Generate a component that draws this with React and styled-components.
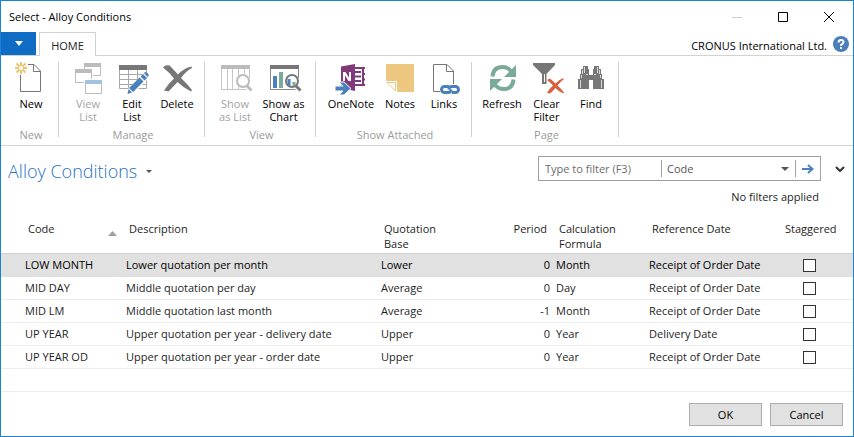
import React, { useState } from "react";
import styled, { createGlobalStyle } from "styled-components";

const GlobalStyle = createGlobalStyle`
  *, *::before, *::after { box-sizing: border-box; }
  body { margin: 0; background: #fff; }
  body, button, input, select {
    font-family: "Open Sans", "Noto Sans", sans-serif;
    font-size: 11px;
    color: #1e1e1e;
  }
  button { cursor: pointer; }
`;

const Window = styled.div`
  display: flex;
  flex-direction: column;
  min-height: 100vh;
  border: 1px solid #1883d7;
  background: #fff;
`;

const TitleBar = styled.header`
  display: flex;
  align-items: center;
  height: 31px;
  padding-left: 8px;
`;

const WindowTitle = styled.span`
  flex: 1;
  color: #000;
`;

const CaptionButton = styled.button`
  display: flex;
  align-items: center;
  justify-content: center;
  width: 46px;
  height: 28px;
  padding: 0;
  border: 0;
  background: none;

  &:last-child { margin-right: 1px; }
`;

const TabStrip = styled.nav`
  display: flex;
  align-items: stretch;
  height: 24px;
  border-bottom: 1px solid #d2d2d2;
`;

const FileTab = styled.button`
  display: flex;
  align-items: center;
  justify-content: center;
  width: 35px;
  padding: 0;
  border: 0;
  background: #0f6cc4;
`;

const Tab = styled.button`
  width: 57px;
  height: 24px;
  margin-left: 3px;
  padding: 2px 0 0;
  border: 1px solid #d2d2d2;
  border-bottom: 0;
  background: #fff;
`;

const Company = styled.span`
  display: flex;
  align-items: center;
  margin-left: auto;
  padding-right: 4px;
`;

const CompanyName = styled.span`
  padding-top: 3px;
  color: #000;
  white-space: nowrap;
`;

const HelpButton = styled.button`
  display: flex;
  margin-left: 6px;
  padding: 0;
  border: 0;
  background: none;
`;

const Ribbon = styled.div`
  display: flex;
  height: 90px;
  padding: 6px 0 8px;
  border-bottom: 1px solid #d2d2d2;
`;

const Group = styled.section`
  display: flex;
  flex-direction: column;
  justify-content: space-between;
  flex: none;
  width: ${(p) => p.$width}px;
  padding-left: 3px;
  border-right: 1px solid #d2d2d2;
`;

const GroupButtons = styled.div`
  display: flex;
  justify-content: center;
`;

const GroupLabel = styled.span`
  color: #9b9b9b;
  line-height: 13px;
  margin-bottom: -4px;
  text-align: center;
`;

const RibbonButton = styled.button`
  display: flex;
  flex-direction: column;
  align-items: center;
  width: ${(p) => p.$width}px;
  padding: 0;
  border: 0;
  background: none;
  color: #000;
  line-height: 13px;

  svg { display: block; margin-bottom: 3px; overflow: visible; }
  &:disabled { color: #a3a3a3; cursor: default; }
`;

const ButtonText = styled.span`
  text-align: center;
  white-space: pre;
`;

const Content = styled.main`
  display: flex;
  flex-direction: column;
  flex: 1;
`;

const PageHeader = styled.div`
  display: flex;
  align-items: flex-start;
  padding: 10px 7px 0;
`;

const PageTitle = styled.h1`
  display: flex;
  align-items: center;
  gap: 9px;
  flex: 1;
  margin: 0;
  padding-top: 3px;
  color: #2672c5;
  font-size: 18px;
  font-weight: 300;
  line-height: 24px;
`;

const FilterBox = styled.form`
  display: flex;
  align-items: center;
  width: 283px;
  height: 25px;
  border: 1px solid #a0a0a0;
`;

const FilterInput = styled.input`
  flex: 1;
  min-width: 0;
  height: 17px;
  padding: 0 6px;
  border: 0;
  outline: 0;
  background: none;

  &::placeholder { color: #6d6d6d; opacity: 1; }
`;

const FieldPicker = styled.div`
  display: grid;
  align-items: center;
  width: 135px;
  height: 17px;
  border: solid #a0a0a0;
  border-width: 0 1px;

  > * { grid-area: 1 / 1; }
  svg { justify-self: end; margin-right: 6px; pointer-events: none; }
`;

const FieldSelect = styled.select`
  appearance: none;
  width: 100%;
  height: 17px;
  padding: 0 20px 0 5px;
  border: 0;
  outline: 0;
  background: none;
  color: #555;
`;

const IconButton = styled.button`
  display: flex;
  align-items: center;
  justify-content: center;
  width: ${(p) => p.$width}px;
  height: 25px;
  padding: 0;
  border: 0;
  background: none;
`;

const Expand = styled(IconButton)`
  margin-left: 13px;
`;

const FilterStatus = styled.p`
  margin: 6px 34px 0 0;
  line-height: 16px;
  text-align: right;
`;

const Table = styled.table`
  width: 100%;
  margin-top: 16px;
  border-collapse: separate;
  border-spacing: 0;
  table-layout: fixed;
`;

const Col = styled.col`
  width: ${(p) => (p.$width ? `${p.$width}px` : "auto")};
`;

const HeadCell = styled.th`
  height: 33px;
  padding: 0 6px;
  border-bottom: 1px solid #d2d2d2;
  font-weight: 400;
  line-height: 15px;
  text-align: ${(p) => p.$align || "left"};
  vertical-align: top;
  white-space: ${(p) => (p.$wrap ? "normal" : "nowrap")};
`;

const SortHeading = styled.span`
  display: flex;
  justify-content: space-between;

  svg { margin-top: 10px; }
`;

const Row = styled.tr`
  background: ${(p) => (p.$selected ? "#e1e1e1" : "#fff")};
  color: ${(p) => (p.$selected ? "#000" : "inherit")};
`;

const Cell = styled.td`
  height: 23px;
  padding: 0 3px;
  border-bottom: 1px solid ${(p) => (p.$selected ? "#e1e1e1" : "#ededed")};
  line-height: 16px;
  text-align: ${(p) => p.$align || "left"};
  white-space: nowrap;
`;

const CheckBox = styled.input`
  appearance: none;
  display: block;
  width: 13px;
  height: 13px;
  margin: 1px auto 0;
  border: 1px solid #333;
  background: #fff;

  &:checked { box-shadow: inset 0 0 0 2px #fff; background: #333; }
`;

const Footer = styled.footer`
  display: flex;
  justify-content: flex-end;
  gap: 8px;
  margin-top: auto;
  padding: 10px 10px 10px;
`;

const DialogButton = styled.button`
  width: 73px;
  height: 23px;
  padding: 0;
  border: 1px solid #adadad;
  background: #e1e1e1;
  color: #000;
`;

const Svg = ({ children, w = 32, h = 32 }) => (
  <svg width={w} height={h} viewBox={`0 0 ${w} ${h}`} fill="none" aria-hidden="true">
    {children}
  </svg>
);

const Caret = ({ w = 8, h = 4, color = "#555" }) => (
  <Svg w={w} h={h}>
    <path d={`M0 0h${w}L${w / 2} ${h}z`} fill={color} />
  </Svg>
);

const NewIcon = () => (
  <Svg>
    <path d="M5.5 13v16.5h20V9L19 2.500h-6" stroke="#777" />
    <path d="M18.5 2.500V9.500h7" stroke="#777" />
    <g stroke="#edc56f" strokeWidth="2">
      <path d="M6 0v12M0 6h12M1.500 1.500l9 9M10.500 1.500l-9 9" />
    </g>
    <circle cx="6" cy="6" r="2.500" fill="#fff" stroke="#edc56f" />
  </Svg>
);

const ViewListIcon = () => (
  <Svg>
    <path d="M12 1h17v4H12z" fill="#bcbcbc" />
    <path d="M12.500 5v2M28.500 5v8.500H21" stroke="#bcbcbc" />
    <path d="M3 7h17v4H3z" fill="#bcbcbc" />
    <path d="M3.500 11v9.500H12M19.500 11v6" stroke="#bcbcbc" />
    <path d="M13.500 22v9.500h16V22" stroke="#bcbcbc" />
    <path d="M13 18h17v4H13z" fill="#a3c2de" />
  </Svg>
);

const EditListIcon = () => (
  <Svg>
    <path d="M3 3h28v5H3z" fill="#777" />
    <path d="M3.500 8v18.500h27V8M3 12.500h28M3 17.500h28M3 22.500h28M12.500 8v19M21.500 8v19" stroke="#a8a8a8" />
    <path d="M30.500 13.500L13 31" stroke="#fff" strokeWidth="7" />
    <path d="M27 12l4 4-2.500 2.500-4-4zM23.500 15.500l4 4L17 30l-4-4z" fill="#4a80bd" />
    <path d="M28 11l1-1q2.500 0 4 3l-1.500 2zM12.500 27l3.500 3.500-4.500 1.500z" fill="#4a80bd" />
  </Svg>
);

const DeleteIcon = () => (
  <Svg>
    <path
      d="M2 5.500Q4 2.500 8.500 3.500 12 7 17 12.500 23 6 30.500 4.500L31 6Q25 9 20 16q6 5.500 11 12l-1 1.500Q22 25.500 16.500 20 11 26 7.500 29.500L3 28.500Q7 22 13 16.500 8 10 2 5.500z"
      fill="#777"
    />
  </Svg>
);

const Magnifier = ({ color }) => (
  <>
    <circle cx="24" cy="19" r="6" fill="#fff" fillOpacity="0.85" stroke={color} strokeWidth="2" />
    <path d="M28 24l4.500 4.500" stroke={color} strokeWidth="3" />
  </>
);

const ShowListIcon = () => (
  <Svg>
    <path d="M2 3h29v4H2z" fill="#bcbcbc" />
    <path d="M2.500 7v20.500h25M30.500 7v9M8.500 7v20M13.500 7v20M19.500 7v20M25.500 7v5" stroke="#c8c8c8" />
    <Magnifier color="#bcbcbc" />
  </Svg>
);

const ShowChartIcon = () => (
  <Svg>
    <path d="M2 3h29v4H2z" fill="#777" />
    <path d="M2.500 7v20.500h25M30.500 7v9" stroke="#8a8a8a" />
    <path d="M5 14h4v12H5z" fill="#4a80bd" />
    <path d="M11 10h4v16h-4z" fill="#7aab98" />
    <Magnifier color="#777" />
    <path d="M19.500 17h3v7q-3-1-3-3z" fill="#4a80bd" />
    <path d="M24.500 20h3v3l-3 1z" fill="#7aab98" />
  </Svg>
);

const OneNoteIcon = () => (
  <Svg>
    <path d="M20 6h8v17h-8M20 10h6M20 14.500h6M20 19h6" stroke="#80397b" strokeWidth="2" />
    <path d="M27 6h3M27 12h3M27 17.500h3M27 23h3" stroke="#80397b" strokeWidth="2" />
    <path d="M6 4.500L20 2v27L6 26z" fill="#80397b" />
    <path d="M9 19v-9M15 19v-9" stroke="#fff" strokeWidth="2" />
    <path d="M8 10h2.500L16 19h-2.500z" fill="#fff" />
    <path d="M0 24h8l-4-4h5l7 6.500L9 33H4l4-4H0z" fill="#4a80bd" stroke="#fff" strokeWidth="1" />
  </Svg>
);

const NotesIcon = () => (
  <Svg>
    <path d="M2 2h28v28H13V19H2z" fill="#edc77f" />
    <path d="M3 20.500h8.500V29z" fill="#fff" stroke="#edc77f" />
  </Svg>
);

const LinksIcon = () => (
  <Svg>
    <path d="M12 29.500H5.500v-27H19l6.500 6.500V22" stroke="#777" />
    <path d="M18.500 2.500V9.500h7" stroke="#777" />
    <path
      d="M21 24.500h-4.500a3 3 0 0 0 0 6H20q3 0 3-3M24 30.500h3.500a3 3 0 0 0 0-6H24q-3 0-3 3"
      stroke="#4a80bd"
      strokeWidth="3"
    />
  </Svg>
);

const RefreshIcon = () => (
  <Svg>
    <path d="M6.500 14.500C7 8 11 5 16.500 5q5 0 8.500 4" stroke="#7aab98" strokeWidth="4" />
    <path d="M30 3v12H18l4-4 4-4z" fill="#7aab98" />
    <path d="M27.500 17.500C27 24 23 27 17.500 27q-5 0-8.500-4" stroke="#7aab98" strokeWidth="4" />
    <path d="M4 29V17h12l-4 4-4 4z" fill="#7aab98" />
  </Svg>
);

const ClearFilterIcon = () => (
  <Svg>
    <path d="M2 1h22v2l-8.500 9v10H11V12L2 3z" fill="#777" />
    <path d="M13.500 12v8" stroke="#fff" />
    <path
      d="M16 18l3-1.500q3 2.500 5.500 5 4-4.500 8-5.500v1.500q-3 2-6 6 4 3.500 6.500 7l-.5 1q-5-2-8-5.500-3 3.500-5.500 5.500L16 31q2-4 6-7.500-3-3.500-6-5.500z"
      fill="#d9603f"
    />
  </Svg>
);

const FindIcon = () => (
  <Svg>
    <path
      d="M8 4h5v3h1v6h4V7h1V4h5v3h2v5h1v5h2v10H18v-9h-4v9H3V17h2v-5h1V7h2z"
      fill="#777"
    />
    <path d="M9.500 5v6M7.500 8v4M22.500 5v6M24.500 8v4M6.500 13v3M25.500 13v3M5.500 18v8M26.500 18v8M11 12.500h2M19 12.500h2" stroke="#d8d8d8" />
  </Svg>
);

const ribbon = [
  { label: "New", width: 58, items: [{ text: "New", icon: NewIcon, width: 45 }] },
  {
    label: "Manage",
    width: 146,
    items: [
      { text: "View\nList", icon: ViewListIcon, width: 44, disabled: true },
      { text: "Edit\nList", icon: EditListIcon, width: 44 },
      { text: "Delete", icon: DeleteIcon, width: 46 },
    ],
  },
  {
    label: "View",
    width: 111,
    items: [
      { text: "Show\nas List", icon: ShowListIcon, width: 44, disabled: true },
      { text: "Show as\nChart", icon: ShowChartIcon, width: 53 },
    ],
  },
  {
    label: "Show Attached",
    width: 156,
    items: [
      { text: "OneNote", icon: OneNoteIcon, width: 54 },
      { text: "Notes", icon: NotesIcon, width: 44 },
      { text: "Links", icon: LinksIcon, width: 44 },
    ],
  },
  {
    label: "Page",
    width: 147,
    items: [
      { text: "Refresh", icon: RefreshIcon, width: 45 },
      { text: "Clear\nFilter", icon: ClearFilterIcon, width: 44 },
      { text: "Find", icon: FindIcon, width: 45 },
    ],
  },
];

const rows = [
  ["LOW MONTH", "Lower quotation per month", "Lower", "0", "Month", "Receipt of Order Date"],
  ["MID DAY", "Middle quotation per day", "Average", "0", "Day", "Receipt of Order Date"],
  ["MID LM", "Middle quotation last month", "Average", "-1", "Month", "Receipt of Order Date"],
  ["UP YEAR", "Upper quotation per year - delivery date", "Upper", "0", "Year", "Delivery Date"],
  ["UP YEAR OD", "Upper quotation per year - order date", "Upper", "0", "Year", "Receipt of Order Date"],
];

const columnWidths = [21, 101, null, 100, 75, 93, 133, 61, 13];

export default function App() {
  const [selected, setSelected] = useState(0);

  return (
    <Window>
      <GlobalStyle />
      <TitleBar>
        <WindowTitle>Select - Alloy Conditions</WindowTitle>
        <CaptionButton aria-label="Minimize" disabled>
          <Svg w={10} h={10}><path d="M0 5.500h10" stroke="#ccc" /></Svg>
        </CaptionButton>
        <CaptionButton aria-label="Maximize">
          <Svg w={10} h={10}><path d="M.5.500h9v9h-9z" stroke="#000" /></Svg>
        </CaptionButton>
        <CaptionButton aria-label="Close">
          <Svg w={10} h={10}><path d="M0 0l10 10M10 0L0 10" stroke="#000" /></Svg>
        </CaptionButton>
      </TitleBar>

      <TabStrip>
        <FileTab aria-label="Application menu"><Caret w={8} h={5} color="#fff" /></FileTab>
        <Tab>HOME</Tab>
        <Company>
          <CompanyName>CRONUS International Ltd.</CompanyName>
          <HelpButton aria-label="Help">
            <Svg w={16} h={16}>
              <circle cx="8" cy="8" r="8" fill="#4a7fba" />
              <path d="M5.500 6.500q0-2.500 2.500-2.500t2.500 2.200Q10.500 7.500 8 9v1" stroke="#fff" strokeWidth="2" />
              <path d="M7 11h2v2H7z" fill="#fff" />
            </Svg>
          </HelpButton>
        </Company>
      </TabStrip>

      <Ribbon>
        {ribbon.map((group) => (
          <Group key={group.label} $width={group.width}>
            <GroupButtons>
              {group.items.map(({ text, icon: Icon, width, disabled }) => (
                <RibbonButton key={text} $width={width} disabled={disabled}>
                  <Icon />
                  <ButtonText>{text}</ButtonText>
                </RibbonButton>
              ))}
            </GroupButtons>
            <GroupLabel>{group.label}</GroupLabel>
          </Group>
        ))}
      </Ribbon>

      <Content>
        <PageHeader>
          <PageTitle>Alloy Conditions <Caret w={6} h={3} /></PageTitle>
          <FilterBox onSubmit={(e) => e.preventDefault()}>
            <FilterInput aria-label="Filter text" placeholder="Type to filter (F3)" />
            <FieldPicker>
              <FieldSelect aria-label="Filter field"><option>Code</option><option>Description</option></FieldSelect>
              <Caret />
            </FieldPicker>
            <IconButton type="submit" aria-label="Apply filter" $width={24}>
              <Svg w={12} h={10}>
                <path d="M0 5h10M6 1l4.500 4L6 9" stroke="#4a80bd" strokeWidth="2" />
              </Svg>
            </IconButton>
          </FilterBox>
          <Expand aria-label="Expand filter pane" $width={12}>
            <Svg w={10} h={6}><path d="M1 1l4 4 4-4" stroke="#333" strokeWidth="2" /></Svg>
          </Expand>
        </PageHeader>
        <FilterStatus>No filters applied</FilterStatus>

        <Table>
          <colgroup>
            {columnWidths.map((width, i) => <Col key={i} $width={width} />)}
          </colgroup>
          <thead>
            <tr>
              <HeadCell as="td" />
              <HeadCell aria-sort="ascending">
                <SortHeading>Code <Svg w={9} h={5}><path d="M0 5h9L4.500 0z" fill="#a0a0a0" /></Svg></SortHeading>
              </HeadCell>
              <HeadCell>Description</HeadCell>
              <HeadCell $wrap>Quotation<br />Base</HeadCell>
              <HeadCell $align="right">Period</HeadCell>
              <HeadCell $wrap>Calculation Formula</HeadCell>
              <HeadCell>Reference Date</HeadCell>
              <HeadCell $align="center">Staggered</HeadCell>
              <HeadCell as="td" />
            </tr>
          </thead>
          <tbody>
            {rows.map((row, i) => {
              const active = i === selected;
              return (
                <Row key={row[0]} $selected={active} onClick={() => setSelected(i)}>
                  <Cell $selected={active} />
                  {row.map((value, c) => (
                    <Cell key={c} $selected={active} $align={c === 3 ? "right" : undefined}>{value}</Cell>
                  ))}
                  <Cell $selected={active}>
                    <CheckBox type="checkbox" aria-label={`Staggered, ${row[0]}`} />
                  </Cell>
                  <Cell $selected={active} />
                </Row>
              );
            })}
            <Row><Cell colSpan={9} /></Row>
          </tbody>
        </Table>

        <Footer>
          <DialogButton>OK</DialogButton>
          <DialogButton>Cancel</DialogButton>
        </Footer>
      </Content>
    </Window>
  );
}
